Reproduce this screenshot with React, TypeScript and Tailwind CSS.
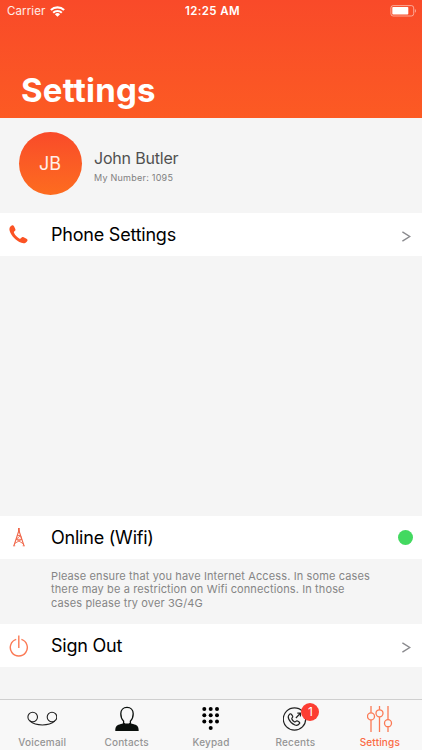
import type { ReactNode } from 'react'

const tabs = [
  { label: 'Voicemail', icon: <VoicemailIcon /> },
  { label: 'Contacts', icon: <ContactIcon /> },
  { label: 'Keypad', icon: <KeypadIcon /> },
  { label: 'Recents', icon: <RecentsIcon />, badge: 1 },
  { label: 'Settings', icon: <SlidersIcon />, active: true },
]

function WifiIcon() {
  return (
    <svg className="w-[15px] h-[11px]" viewBox="0 0 15 11" fill="none" stroke="#fff" strokeWidth="2.1">
      <path d="M.9 4.1a9.4 9.4 0 0 1 13.2 0" />
      <path d="M3.2 6.7a6.1 6.1 0 0 1 8.6 0" />
      <path d="M7.5 10.8 4.9 8.3a3.7 3.7 0 0 1 5.2 0z" fill="#fff" stroke="none" />
    </svg>
  )
}

function BatteryIcon() {
  return (
    <svg className="w-[27px] h-3" viewBox="0 0 27 12" fill="none">
      <rect x=".9" y=".6" width="22.8" height="10.4" rx="2.3" stroke="#fff" strokeOpacity=".5" />
      <rect x="2.3" y="2" width="16" height="7.6" rx=".8" fill="#fff" />
      <path d="M24.9 4v3.8c1.5-.6 1.5-3.2 0-3.8z" fill="#fff" fillOpacity=".5" />
    </svg>
  )
}

function PhoneIcon() {
  return (
    <svg className="w-[19px] h-[19px]" viewBox="0 0 19 19" fill="#fb5324">
      <path d="M2.7.5C3.7 0 4.5.4 5 1.3l1.3 2.6c.4.9.1 1.6-.6 2.2-.8.6-1 1.1-.6 2 1.1 2.3 2.8 4.1 5.1 5.3.9.5 1.4.2 2-.5.7-.9 1.4-1.1 2.4-.6l2.9 1.5c1 .5 1.3 1.3.8 2.1-1.4 2.2-3.4 2.9-5.9 1.9C6.9 15.7 2.5 11.3.7 6 0 3.7.6 1.6 2.7.5z" />
    </svg>
  )
}

function TowerIcon() {
  return (
    <svg className="w-3 h-[19px]" viewBox="0 0 12 19" fill="none" stroke="#f0674a">
      <path d="M5.9 0v4" strokeWidth="1.8" />
      <path d="M5.9 2.5 1 17.5M5.9 2.5l5 15" strokeWidth="1.1" />
      <path d="M4.3 7.5h3.2L3.3 11.3h5.5L1.8 15.4M3.3 11.3l7 4.5M7.5 7.5l1.3 3.8" strokeWidth=".9" />
      <path d="M0 17.8h2.2M9.7 17.8h2.2" strokeWidth=".9" />
    </svg>
  )
}

function PowerIcon() {
  return (
    <svg className="w-5 h-[22px]" viewBox="0 0 20 22" fill="none" stroke="#fb7a55" strokeWidth="1.4">
      <path d="M7.2 4.4a8.5 8.5 0 1 0 5.2 0" />
      <path d="M9.8.5V13" />
    </svg>
  )
}

function VoicemailIcon() {
  return (
    <svg className="w-[30px] h-[26px]" viewBox="0 0 30 26" fill="none" stroke="#222" strokeWidth="1.1">
      <circle cx="5.7" cy="11" r="4.8" />
      <circle cx="25" cy="11" r="4.8" />
      <path d="M2.9 15c6 5.3 18.9 5.3 24.9 0" />
    </svg>
  )
}

function ContactIcon() {
  return (
    <svg className="w-6 h-[26px]" viewBox="0 0 24 26">
      <path d="M.3 24.9c0-4 1.2-5.5 4.2-6.4 2-.6 3.6-1 4.3-2h6.4c.7 1 2.3 1.4 4.3 2 3 .9 4.2 2.4 4.2 6.4z" fill="#0a0f0c" />
      <path d="M12 1.4c3.7 0 6.2 2.6 6.2 6.3 0 2.8-1 5.6-2.8 7.4v2.1c-1.5 1.4-5.3 1.4-6.8 0v-2.1C6.8 13.3 5.8 10.5 5.8 7.7c0-3.7 2.5-6.3 6.2-6.3z" fill="#f8f8f8" stroke="#0a0f0c" strokeWidth="1.3" />
    </svg>
  )
}

function KeypadIcon() {
  return (
    <svg className="w-[18px] h-[26px]" viewBox="0 0 18 26" fill="#000">
      {[3, 9.3, 15.6].map((cy) => [2.3, 8.7, 15].map((cx) => <circle key={`${cx}-${cy}`} cx={cx} cy={cy} r="2" />))}
      <circle cx="8.7" cy="21.9" r="2" />
    </svg>
  )
}

function RecentsIcon() {
  return (
    <svg className="w-6 h-[26px]" viewBox="0 0 24 26" fill="none" stroke="#222" strokeWidth="1.2">
      <circle cx="11.5" cy="13" r="11.2" />
      <path d="M6.7 8.1c.7-.5 1.3-.4 1.8.3l1.1 1.7c.4.7.2 1.2-.4 1.700-.6.5-.6.9-.2 1.600.6 1 1.300 1.700 2.300 2.300.7.4 1.100.3 1.600-.3s1-.8 1.700-.4l1.500 1c.7.5.8 1.100.3 1.700-1.200 1.600-2.700 2-4.500 1.300-3-1.200-5-3.200-6.200-6-.8-1.900-.5-3.700 1-4.900z" />
      <path d="m12.900 12 4.300-4.600M14.300 7.200h3.100v3.200" />
    </svg>
  )
}

function SlidersIcon() {
  return (
    <svg className="w-[26px] h-[26px]" viewBox="0 0 26 26" fill="none" stroke="#fb7a55" strokeWidth="1.3">
      <path d="M4 0v6.700M4 14v12M12.500 0v3.700M12.500 11v15M21 0v13.500M21 20.800V26" />
      <circle cx="4" cy="10.400" r="3.500" />
      <circle cx="12.500" cy="7.300" r="3.500" />
      <circle cx="21" cy="17.200" r="3.500" />
    </svg>
  )
}

function Chevron() {
  return (
    <svg className="w-[9px] h-[11px] mr-[11px] mt-1" viewBox="0 0 9 11" fill="none" stroke="#8a8a8e" strokeWidth="1.4">
      <path d="m.4.8 7.300 4.700L.4 10.200" />
    </svg>
  )
}

function Row({ icon, label, children }: { icon: ReactNode; label: string; children: ReactNode }) {
  return (
    <button className="flex items-center w-full h-[43px] shrink-0 bg-white text-left">
      <span className="flex justify-center w-[37px] mr-[14px]">{icon}</span>
      <span className="flex-1 text-[18px] leading-6 tracking-[-0.22px] text-black">{label}</span>
      {children}
    </button>
  )
}

export default function App() {
  return (
    <div className="flex flex-col w-full h-[750px] bg-[#f5f5f5] overflow-hidden font-['Inter','Liberation_Sans',sans-serif]">
      <header className="flex flex-col justify-between h-[118px] shrink-0 bg-linear-to-b from-[#f94a29] to-[#fc5a23] text-white">
        <div className="grid grid-cols-3 items-center h-[22px] pl-[7px] pr-[5px]">
          <div className="flex items-center gap-[5px] pt-px text-[11.5px] tracking-[0.1px] text-white/90">
            Carrier
            <WifiIcon />
          </div>
          <span className="pt-px pl-px text-center text-[11.5px] font-semibold tracking-[0.35px]">12:25 AM</span>
          <div className="flex justify-end">
            <BatteryIcon />
          </div>
        </div>
        <h1 className="pl-[21px] pb-2 text-[33px] leading-10 font-bold tracking-[0.2px]">Settings</h1>
      </header>

      <section className="flex items-center h-[95px] shrink-0 pl-[18.5px] pb-[5px]">
        <div className="flex items-center justify-center size-[63px] rounded-full bg-linear-to-b from-[#f94a29] to-[#fd6c1f] text-[18px] text-white/90">
          JB
        </div>
        <div className="ml-[12.5px] pt-[5px]">
          <p className="text-[16px] leading-5 tracking-[-0.2px] text-[#505050]">John Butler</p>
          <p className="mt-1 text-[9px] leading-3 tracking-[0.25px] text-[#808080]">My Number: 1095</p>
        </div>
      </section>

      <Row icon={<PhoneIcon />} label="Phone Settings">
        <Chevron />
      </Row>

      <div className="flex-1" />

      <Row icon={<TowerIcon />} label="Online (Wifi)">
        <span className="size-[15px] mr-[9px] rounded-full bg-[#43d960]" />
      </Row>
      <p className="h-[65px] shrink-0 pt-[11px] pl-[51px] text-[11px] leading-[13.3px] tracking-[0.12px] text-[#858585]">
        Please ensure that you have Internet Access. In some cases
        <br />
        there may be a restriction on Wifi connections. In those
        <br />
        cases please try over 3G/4G
      </p>
      <Row icon={<PowerIcon />} label="Sign Out">
        <Chevron />
      </Row>

      <nav className="flex h-[51px] shrink-0 mt-8 border-t border-[#cfcfcf] bg-[#f8f8f8]">
        {tabs.map(({ label, icon, badge, active }) => (
          <button key={label} className="flex flex-1 flex-col items-center pt-1.5">
            <span className="relative">
              {icon}
              {badge && (
                <span className="absolute -top-[3px] left-[18px] flex items-center justify-center size-[18px] rounded-full bg-[#fc3d32] text-[12px] text-white">
                  {badge}
                </span>
              )}
            </span>
            <span className={`mt-1 text-[10px] leading-3 font-medium tracking-[0.15px] ${active ? 'text-[#fb6a43]' : 'text-[#959595]'}`}>
              {label}
            </span>
          </button>
        ))}
      </nav>
    </div>
  )
}
